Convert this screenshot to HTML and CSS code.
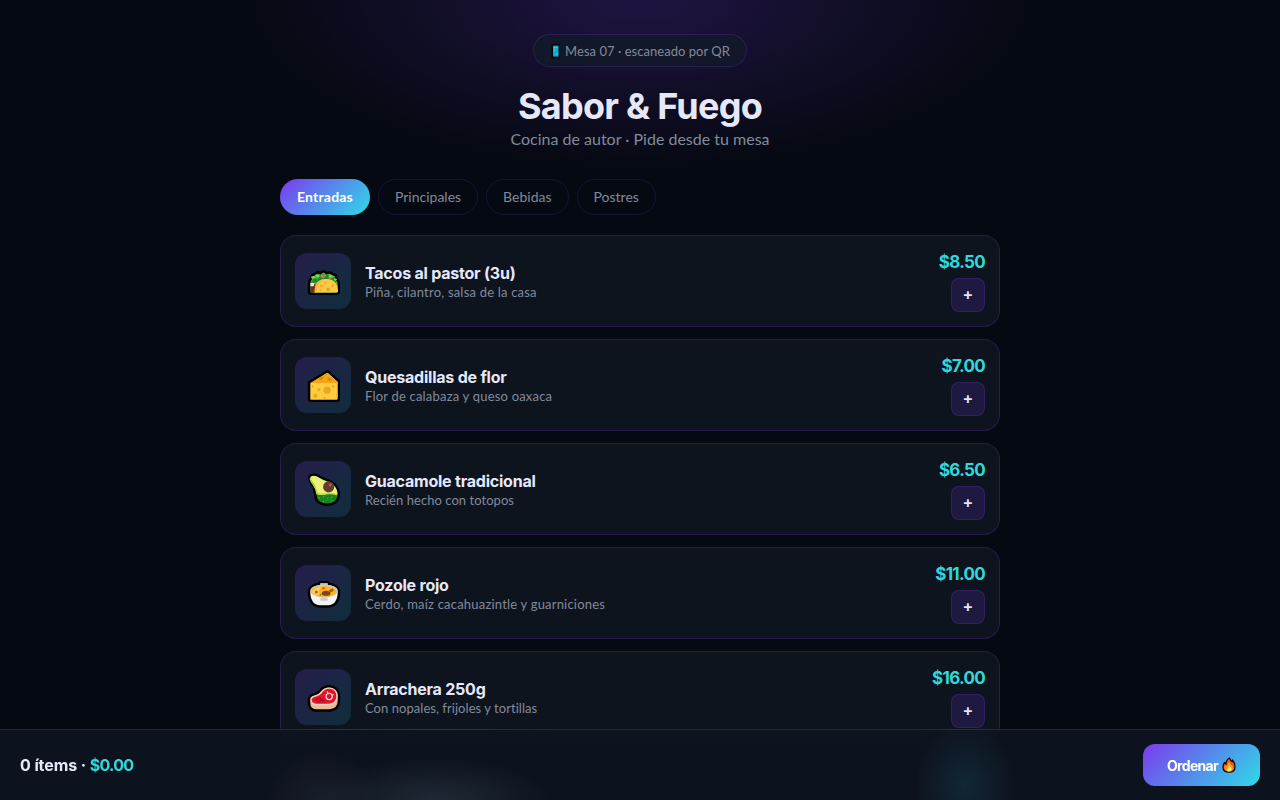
FILE: index.html
```html
<!DOCTYPE html>
<html lang="es">
<head>
  <meta charset="UTF-8">
  <meta name="viewport" content="width=device-width, initial-scale=1.0">
  <title>Sabor &amp; Fuego - Menú digital</title>
  <link rel="stylesheet" href="styles.css">
</head>
<body>
  <header class="hero">
    <div class="table-pill">
      <svg class="phone" viewBox="0 0 12 16">
        <rect x="1.500" y="1" width="8.500" height="14.500" rx="1" fill="#05070b"/>
        <rect x="3" y="2.600" width="5.500" height="11" fill="#10a8cf"/>
        <path d="M4 4h1.200v1.200H4zM6.300 4h1.200v1.200H6.300zM4 6.500h1.200v1.200H4zM6.300 10.500h1.200v1.200H6.300z" fill="#5fdcf2"/>
      </svg>
      <span>Mesa 07 · escaneado por QR</span>
    </div>
    <h1>Sabor &amp; Fuego</h1>
    <p class="subtitle">Cocina de autor · Pide desde tu mesa</p>
  </header>

  <main class="wrap">
    <nav class="tabs">
      <button class="tab active">Entradas</button>
      <button class="tab">Principales</button>
      <button class="tab">Bebidas</button>
      <button class="tab">Postres</button>
    </nav>

    <section class="menu">
      <article class="item">
        <div class="thumb">
          <!-- taco -->
          <svg viewBox="0 0 32 32">
            <path d="M2 26V18Q2 15 4 13Q4 9 8 9Q10 6 13 8Q16 4 19 8Q23 6 25 9Q29 9 28 13Q31 15 31 19V26Q31 28 28 28H5Q2 28 2 26Z" fill="#4fae35" stroke="#000" stroke-width="2.4" stroke-linejoin="round"/>
            <path d="M4 17l3-5 3 2 3-4 3 3 4-4 3 4 4-1 1 5z" fill="#168c37"/>
            <path d="M5 12h2M9 10l2 1M22 11h2M27 14h1" stroke="#77e04b" stroke-width="2" stroke-linecap="round"/>
            <circle cx="15" cy="11" r="1.7" fill="#e06b4b"/><circle cx="22" cy="13" r="1.3" fill="#e06b4b"/>
            <path d="M3.4 18h5v8.5h-5z" fill="#702a24"/><path d="M3.4 17.5h4l-1 3h-3z" fill="#f3e6e1"/>
            <path d="M7.5 26.7C7 18 11 13.6 18.5 13.6S30 18 30 25.5q0 1.2-1.5 1.2z" fill="#ffca43"/>
            <path d="M7.5 26.7C7 18 11 14 17 13.8C12 16 9.5 20 9.7 26.7z" fill="#ffb33a"/>
            <g fill="#e9a11f"><circle cx="14" cy="20" r="1.2"/><circle cx="18" cy="17" r="1"/><circle cx="20.5" cy="23.5" r="1.8"/><circle cx="25" cy="20" r="1"/><circle cx="13" cy="24.5" r=".9"/></g>
          </svg>
        </div>
        <div class="info">
          <h3>Tacos al pastor (3u)</h3>
          <p>Piña, cilantro, salsa de la casa</p>
        </div>
        <div class="side">
          <span class="price">$8.50</span>
          <button class="add">+</button>
        </div>
      </article>

      <article class="item">
        <div class="thumb">
          <!-- cheese -->
          <svg viewBox="0 0 32 32">
            <path d="M2 13L18.5 3Q20 2 21.3 3.2L31 12V28.5Q31 31 28.5 31H4.500Q2 31 2 28.500Z" fill="#ffcb3f" stroke="#000" stroke-width="2.4" stroke-linejoin="round"/>
            <path d="M3.300 13.600L19 4.200Q20 3.600 21 4.500L29.800 12.600V13.600Z" fill="#f4a414"/>
            <path d="M11 9l3-2q3 1 1 3t-4-1zM23 9q-3-2-3 1t5 1z" fill="#dd8c09"/>
            <g fill="#e9a820"><circle cx="19.500" cy="20.500" r="3.500"/><circle cx="11.500" cy="20" r="1.600"/><circle cx="8" cy="26" r="2"/><circle cx="5.500" cy="17" r="1"/><circle cx="25.500" cy="17" r="1.200"/><path d="M29.800 22.500q-3 2.200 0 5z"/><circle cx="17" cy="28" r="1"/></g>
          </svg>
        </div>
        <div class="info">
          <h3>Quesadillas de flor</h3>
          <p>Flor de calabaza y queso oaxaca</p>
        </div>
        <div class="side">
          <span class="price">$7.00</span>
          <button class="add">+</button>
        </div>
      </article>

      <article class="item">
        <div class="thumb">
          <!-- avocado -->
          <svg viewBox="0 0 32 32">
            <path d="M3 2.500C6 .5 10 2 14 4.500C18 7 25 8 28 12.500C32 18 32 25 27 28.500C22 32 13 31.500 9.500 26.500C7.500 23.500 8.500 19 6.500 14.500C5 11 0 6 3 2.500Z" fill="#18831e" stroke="#000" stroke-width="2.400"/>
            <path d="M3.800 3.500C7 1.500 10 3.500 14 5.800C19 8.500 24 9 27 13C29.500 16.500 30 19.500 29 21.500C24 18 15 23 11 20.500C8.500 18 9 14 6.500 10.500C5 8 2.200 5.500 3.800 3.500Z" fill="#eaf17a"/>
            <path d="M3.200 5C2.500 9 9 12 9.500 20C14 22 20 18 29 21" fill="none" stroke="#b7dd38" stroke-width="1.300"/>
            <circle cx="21" cy="13.500" r="5.400" fill="#663a2e"/><circle cx="22.500" cy="11.500" r="1.600" fill="#9c6551"/>
            <g fill="#43b52c"><circle cx="12" cy="24" r=".8"/><circle cx="16" cy="23" r=".8"/><circle cx="16" cy="27.500" r=".8"/><circle cx="20" cy="25" r=".8"/><circle cx="24" cy="23.500" r=".8"/><circle cx="24" cy="27" r=".8"/></g>
          </svg>
        </div>
        <div class="info">
          <h3>Guacamole tradicional</h3>
          <p class="tight">Recién hecho con totopos</p>
        </div>
        <div class="side">
          <span class="price">$6.50</span>
          <button class="add">+</button>
        </div>
      </article>

      <article class="item">
        <div class="thumb">
          <!-- stew bowl -->
          <svg viewBox="0 0 32 32">
            <path d="M12 6.500Q12 5 13.500 5H19.500Q21 5 21 6.500Q31 8 31 15Q31 23 26 27Q24 28.500 21 28.500H12Q9 28.500 7 27Q2 23 2 15Q2 8 12 6.500Z" fill="#f3f3f3" stroke="#000" stroke-width="2.400"/>
            <path d="M12.800 6h7.400v4h-7.400z" fill="#bcbcbc"/>
            <ellipse cx="16.500" cy="13.500" rx="13.300" ry="6.300" fill="#c9cacb"/>
            <ellipse cx="16.500" cy="14" rx="12" ry="5.200" fill="#ffb21b"/>
            <path d="M5 14Q8 9.500 16 9.600Q11 11 12 14t-3 3.400Q5 16 5 14z" fill="#ffd34d"/>
            <ellipse cx="18.500" cy="15.800" rx="4.200" ry="2.500" fill="#80441f"/><path d="M21 13l4-2 1 2-3 2z" fill="#a5591b"/>
            <circle cx="9" cy="14.500" r="1.500" fill="#d94a2f"/><circle cx="16" cy="11" r="1.200" fill="#e95036"/><circle cx="13" cy="17.300" r=".8" fill="#4d861f"/>
            <path d="M13 20h7v3h-7z" fill="#c8c9cb"/>
          </svg>
        </div>
        <div class="info">
          <h3>Pozole rojo</h3>
          <p>Cerdo, maíz cacahuazintle y guarniciones</p>
        </div>
        <div class="side">
          <span class="price">$11.00</span>
          <button class="add">+</button>
        </div>
      </article>

      <article class="item">
        <div class="thumb">
          <!-- steak -->
          <svg viewBox="0 0 32 32">
            <path d="M2 18Q2 14 7 13Q11 12 13 9Q16 5 22 5Q31 6 31 15V19Q31 28 22 28.500H9Q2 28.500 2 21Z" fill="#edb996" stroke="#000" stroke-width="2.400"/>
            <path d="M3.300 18Q3.500 14.800 7.500 14.200Q12 13.500 14 10Q16.500 6.200 22 6.200Q29.800 7 29.800 15Q29 23 21.500 23.500H9Q3.300 23.500 3.300 18Z" fill="#f7d2bc"/>
            <path d="M4.500 18Q5 15.800 8 15.300Q13 14.300 15 10.700Q17.500 7.400 22 7.400Q28.600 8 28.500 15Q28 21.500 21 22H9Q4.500 22 4.500 18Z" fill="#e2132b"/>
            <circle cx="21.500" cy="15" r="3" fill="#cf1328" stroke="#fbd9ce" stroke-width="1.200"/><path d="M20.500 12l-1-2M24.300 14l1.500-1" stroke="#fbd9ce"/>
            <path d="M8 19l3-2M11 20.500l4-3M15 20l2-1M12 16l4 4" stroke="#981025" stroke-width="1.100"/>
          </svg>
        </div>
        <div class="info">
          <h3>Arrachera 250g</h3>
          <p class="tight">Con nopales, frijoles y tortillas</p>
        </div>
        <div class="side">
          <span class="price">$16.00</span>
          <button class="add">+</button>
        </div>
      </article>
    </section>
  </main>

  <footer class="cart-bar">
    <div class="summary">0 ítems · <span class="total">$0.00</span></div>
    <button class="order">
      Ordenar
      <svg class="fire" viewBox="0 0 14 16">
        <path d="M7.500 1Q8 3 10 4.500Q10.500 3.500 10.500 3Q13 6 13 10Q13 15.200 7 15.200T1 10Q1 7.500 2.500 5.500L4 7Q4 3 7.500 1Z" fill="#f2561b" stroke="#140b08" stroke-width="1.300" stroke-linejoin="round"/>
        <path d="M7 4.500Q8 7 10 8.500Q11.500 10 11 12Q10 14.500 7 14.500T2.500 11Q2.500 9.500 3.500 8.500L5 9.500Q5.500 6.500 7 4.500Z" fill="#ff9b20"/>
        <path d="M7.500 8.500Q10 11 9.700 12.500Q9.300 14.500 7 14.500T4.500 12.500L5.800 12Q6 10 7.500 8.500Z" fill="#ffe65c"/>
      </svg>
    </button>
  </footer>
</body>
</html>
```
FILE: styles.css
```css
:root {
  --bg: #050911;
  --card: #0d141e;
  --line: rgba(124, 58, 237, 0.22);
  --text: #e6e8fa;
  --muted: #818a9c;
  --cyan: #2fd8db;
  --grad: linear-gradient(135deg, #7c3aed, #2cdce8);
  --head: Inter, "Liberation Sans", sans-serif;
}

* {
  box-sizing: border-box;
  margin: 0;
  padding: 0;
}

body {
  background: var(--bg);
  color: var(--text);
  font-family: Lato, "Liberation Sans", sans-serif;
  padding-bottom: 57px;
}

button {
  font-family: inherit;
  cursor: pointer;
}

/* Header */
.hero {
  display: flex;
  flex-direction: column;
  align-items: center;
  height: 179px;
  padding-top: 34px;
  background: radial-gradient(400px 172px at 50% 0, rgba(124, 58, 237, 0.22), transparent);
}

.table-pill {
  display: flex;
  align-items: center;
  gap: 3px;
  height: 33px;
  padding: 0 16px;
  border: 1px solid var(--line);
  border-radius: 999px;
  background: rgba(17, 25, 40, 0.8);
  color: var(--muted);
  font-size: 13px;
  letter-spacing: 0.03px;
}

.phone {
  width: 12px;
  height: 16px;
}

h1 {
  margin-top: 17px;
  font-family: var(--head);
  font-size: 36px;
  line-height: 44px;
  font-weight: 700;
  letter-spacing: -0.75px;
}

.subtitle {
  margin-top: 1px;
  color: var(--muted);
  font-size: 16px;
  line-height: 20px;
}

.wrap {
  width: 720px;
  margin: 0 auto;
}

/* Category tabs */
.tabs {
  display: flex;
  gap: 8px;
  margin-bottom: 20px;
}

.tab {
  height: 36px;
  padding: 0 16px 2px;
  border: 1px solid rgba(124, 58, 237, 0.18);
  border-radius: 999px;
  background: transparent;
  color: var(--muted);
  font-size: 14px;
}

.tab.active {
  padding: 0 17px 2px;
  border: 0;
  background: var(--grad);
  color: #fff;
  font-weight: 700;
  letter-spacing: 0.2px;
}

/* Menu cards */
.menu {
  display: grid;
  gap: 12px;
}

.item {
  display: flex;
  align-items: center;
  gap: 14px;
  height: 92px;
  padding: 14px;
  border: 1px solid var(--line);
  border-radius: 16px;
  background: var(--card);
}

.thumb {
  display: grid;
  place-items: center;
  width: 56px;
  height: 56px;
  border-radius: 12px;
  background: linear-gradient(135deg, rgba(124, 58, 237, 0.22), rgba(34, 211, 238, 0.14));
}

.thumb svg {
  width: 33px;
  height: 33px;
}

.info {
  flex: 1;
  padding-top: 2px;
}

.info h3 {
  font-family: var(--head);
  font-size: 16px;
  line-height: 20px;
  font-weight: 700;
  letter-spacing: -0.22px;
}

.info p {
  color: var(--muted);
  font-size: 13px;
  line-height: 18px;
  letter-spacing: 0.2px;
}

.info .tight {
  letter-spacing: 0.05px;
}

.side {
  display: flex;
  flex-direction: column;
  align-items: flex-end;
  gap: 5px;
}

.price {
  padding-top: 1px;
  color: var(--cyan);
  font-family: var(--head);
  font-size: 17px;
  line-height: 22px;
  font-weight: 700;
  letter-spacing: -0.7px;
}

.add {
  width: 34px;
  height: 34px;
  padding-bottom: 2px;
  border: 1px solid var(--line);
  border-radius: 8px;
  background: #1e1940;
  color: var(--text);
  font-family: var(--head);
  font-size: 16px;
  font-weight: 600;
}

/* Fixed cart bar */
.cart-bar {
  position: fixed;
  left: 0;
  right: 0;
  bottom: 0;
  display: flex;
  align-items: center;
  justify-content: space-between;
  height: 71px;
  padding: 0 20px;
  border-top: 1px solid rgba(124, 58, 237, 0.25);
  background:
    radial-gradient(115px 42px at 435px 100%, rgba(120, 150, 165, 0.17), transparent),
    radial-gradient(55px 50px at 322px 100%, rgba(120, 130, 150, 0.1), transparent),
    radial-gradient(50px 62px at 965px 80%, rgba(35, 140, 165, 0.17), transparent),
    rgba(14, 21, 32, 0.92);
  backdrop-filter: blur(12px);
}

.summary {
  font-family: var(--head);
  font-size: 16px;
  font-weight: 700;
  letter-spacing: -0.1px;
}

.total {
  color: var(--cyan);
  letter-spacing: -0.7px;
}

.order {
  display: flex;
  align-items: center;
  justify-content: center;
  gap: 4px;
  width: 117px;
  height: 42px;
  border: 0;
  border-radius: 12px;
  background: var(--grad);
  color: #fff;
  font-family: var(--head);
  font-size: 14px;
  font-weight: 700;
  letter-spacing: -0.7px;
}

.fire {
  width: 14px;
  height: 16px;
}
```
